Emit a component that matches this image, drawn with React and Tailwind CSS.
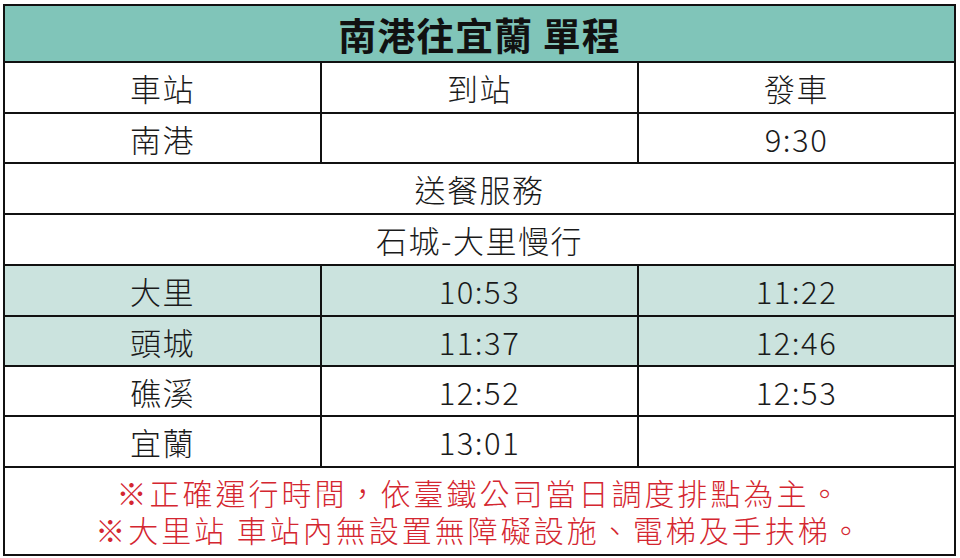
import React from "react";

const font = { fontFamily: '"Noto Sans CJK TC", "Noto Sans", sans-serif' };

function Row({ cells, shaded, h }) {
  return (
    <div
      className={`grid grid-cols-[317px_317px_1fr] border-b-2 border-[#111] ${h} ${shaded ? "bg-[#cbe3de]" : "bg-white"}`}
    >
      {cells.map((c, i) => (
        <div
          key={i}
          className={`flex items-center justify-center text-[31px] font-light tracking-[1.5px] text-[#1a1a1a] ${i < 2 ? "border-r-2 border-[#111]" : ""}`}
        >
          {c}
        </div>
      ))}
    </div>
  );
}

function Full({ text, h }) {
  return (
    <div className={`flex items-center justify-center border-b-2 border-[#111] bg-white text-[31px] font-light tracking-[1.5px] text-[#1a1a1a] ${h}`}>
      {text}
    </div>
  );
}

export default function App() {
  return (
    <div className="w-[960px] h-[558px] bg-white pt-[4px] pl-[3px] overflow-hidden" style={font}>
      <div className="w-[953px] border-2 border-[#111] leading-none">
        <div className="h-[57px] flex items-center justify-center bg-[#80c5b9] border-b-2 border-[#111] text-[38px] font-bold tracking-[1px] text-[#111]">
          南港往宜蘭 單程
        </div>
        <Row h="h-[51px]" cells={["車站", "到站", "發車"]} />
        <Row h="h-[50px]" cells={["南港", "", "9:30"]} />
        <Full h="h-[51px]" text="送餐服務" />
        <Full h="h-[51px]" text="石城-大里慢行" />
        <Row h="h-[51px]" shaded cells={["大里", "10:53", "11:22"]} />
        <Row h="h-[50px]" shaded cells={["頭城", "11:37", "12:46"]} />
        <Row h="h-[50px]" cells={["礁溪", "12:52", "12:53"]} />
        <Row h="h-[51px]" cells={["宜蘭", "13:01", ""]} />
        <div className="h-[86px] flex flex-col items-center justify-center text-[30px] leading-[37px] font-light tracking-[3px] text-[#d42630]">
          <div>※正確運行時間，依臺鐵公司當日調度排點為主。</div>
          <div>※大里站 車站內無設置無障礙設施、電梯及手扶梯。</div>
        </div>
      </div>
    </div>
  );
}
